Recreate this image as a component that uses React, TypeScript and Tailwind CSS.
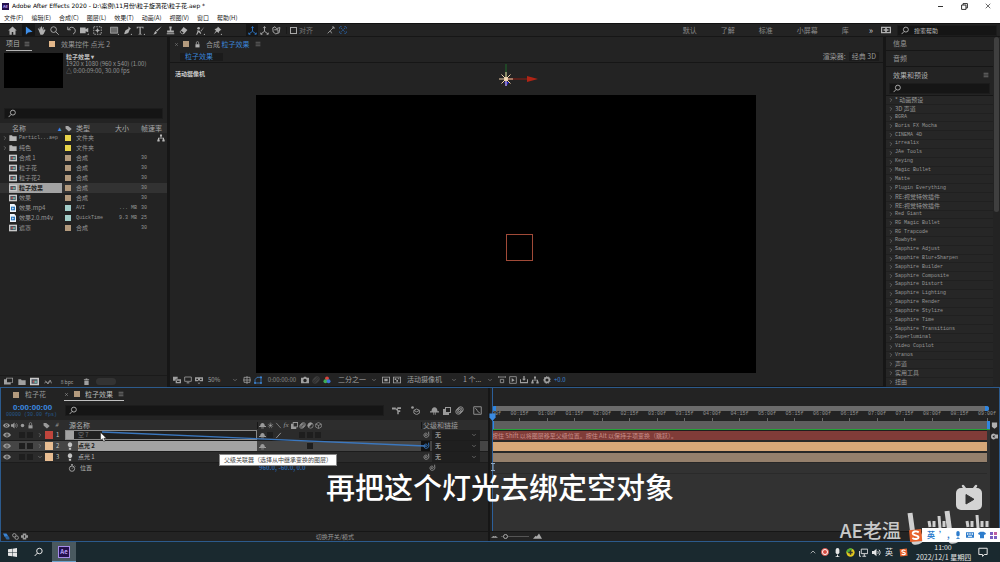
import type { ReactNode } from 'react'
import { ChevronDown, ChevronRight, ChevronUp, Menu, X } from 'lucide-react'
import clsx from 'clsx'

// ─── Icons (12 × 12 grid) ─────────────────────────────────────────────────────

const line = { fill: 'none', stroke: 'currentColor', strokeWidth: 1.2 }

const ICONS = {
  home: <path d="M6 0.5 0.3 6H2v5.5h3V8h2v3.5h3V6h1.7z" />,
  arrow: <path d="M2.5 0.5v11l3-3 6-1z" />,
  hand: <path d="M2 5 1 3.5l1-.6L3.6 5V1.5h1.2V5L5.5.6h1.2V5L8 1.2l1 .3L8.4 6l2-1.6 1 .8-2.6 5.3L7.5 11.5H4.6z" />,
  zoom: <g {...line}><circle cx="4.8" cy="4.8" r="3.8" /><path d="m7.6 7.6 4 4" /></g>,
  rotate: <g {...line}><path d="M2.2 4.2A4.7 4.7 0 1 1 8 10.8" /><path d="M1 1v4h4" /></g>,
  camera: <path d="M0 2h7.5v2.4L11 2.3v6L7.5 7v2.5H0zM9.5 11.8h2.3V9.5z" />,
  panBehind: <g><path {...line} strokeDasharray="2 1.4" d="M1 1h10v10H1z" /><path d="M6 2.8 7.2 5 9.4 6 7.2 7 6 9.2 4.8 7 2.6 6 4.8 5z" /></g>,
  rect: <g><path d="M.6 1.6h9.6v8H.6z" fill="#6b6b6b" stroke="currentColor" /><path d="M10 12h2v-2z" /></g>,
  pen: <path d="m7.4.6 3.2 3.2-1.6 1-2 4.4-4.6 1.8L1.6 10l1.8-4.4 3.8-2zM10 12h2v-2z" />,
  type: <path d="M1 1h9v2.4H9L8.4 2H6.3v8.2l1.4.3v.7H3.3v-.7l1.4-.3V2H2.6L2 3.4H1zM10 12h2v-2z" />,
  brush: <path d="m11.6.4-6 7-1.6-1.3zM3.6 6.8l1.7 1.5c-.5 2-2.6 3-5 2.900 1.800-.8 1.500-3.300 3.300-4.400z" />,
  stamp: <path d="M4.400.8h3.200v1.800L7 3.800V6h3.500v2.500h-9V6H5V3.800l-.6-1.200zM1 9.800h10V11H1z" />,
  eraser: <path d="m6.200 1.200 5 4-4.600 5.600-2.400.2L.8 8zM1.800 8l3 2.400L6.200 9 3 6.400z" />,
  roto: <g><circle cx="3.500" cy="3" r="1.800" /><path d="M1 6h3.500L7 9.500 6 10.500 3.500 8 1.500 11.500H.2L2 7z" /><path d="m11.500.5-4.600 6.800L6 6.500z" /><path d="M10 12h2v-2z" /></g>,
  pin: <path d="m6.500.6 4.800 4.600-1.500.3-2 2.200-.2 2-2.400-2.300L1 11l3-4.800-2-2.200 2-.2L6.200 2zM10 12h2v-2z" />,
  axis: <g {...line}><path d="M6 1v6L1.500 10.500M6 7l4.500 3.500" /><path d="M4.500 2.800 6 .8l1.500 2M1 8.800v2.200h2.200M11 8.800v2.200H8.800" /></g>,
  axisView: <g {...line}><path d="M1 2.500 4 1l2 2.500L10.500 2 9.500 9 5 10.500 1.500 8z" /><path d="M3 5h5v4" /></g>,
  snapEdge: <g {...line}><path d="m1 11 4-4 2 4M5 7l5-5M7.500 1.500h3v3" /></g>,
  snapAll: <g {...line}><path d="M1 4V1h3M8 1h3v3M11 8v3H8M4 11H1V8M3 3l6 6M9 3 3 9" strokeDasharray="2.500 1" /></g>,
  book: <path fillRule="evenodd" d="M0 2h12v8H0zM1.500 3.500v5H5V7H3V5h2V3.500zM7 3.500V5h2v2H7v1.500h3.500v-5z" />,
  search: <g {...line}><circle cx="6.500" cy="4.800" r="3.300" /><path d="M4.200 7.200.8 10.800" /></g>,
  lock: <g><path d="M2.500 5.500h7v5.500h-7z" /><path {...line} d="M4 5.500V3a2 2 0 0 1 4 0v2.500" /></g>,
  tag: <path d="M1 1.500h4.500L11.500 7l-4.700 4L1 6z" />,
  folder: <path d="M.5 2h4l1 1.300h6v7.200H.5z" />,
  comp: <g><path d="M0 1h12v10H0z" fill="#c9c9c9" /><path d="M2 3h8v6H2z" fill="#4b5560" /><circle cx="5" cy="6" r="1.500" fill="#b55" /><path d="M6 5h3v3H6z" fill="#6bb0a6" /></g>,
  movie: <g><path d="M1.500 0h6.500l2.500 2.500V12h-9z" fill="#eef4fa" /><path d="M3 4h6v5.500H3z" fill="#2a78c0" /><path d="M5 5.200v3l2.400-1.500z" fill="#fff" /></g>,
  tree: <path d="M4.500.8h3v3h-1v1.700h4v2.700h1v3H8v-3h1V6.800H3v1.400h1v3H.5v-3h1V5.500h4V3.800h-1z" />,
  footage: <path d="M0 3h3V1h9v6.500H9V10H0zM4 2v5h7V2z" fillRule="evenodd" />,
  flow: <g {...line}><path d="M1 8c2-6 4 3 6-2s4 0 4 2M2 4l4 5 4-6" /></g>,
  trash: <path d="M1.500 2h3V.8h3V2h3v1.300h-9zM2.300 4.200h7.400V12H2.300z" fillRule="evenodd" />,
  layers2: <path d="M0 1h7v3H5v3H0zM4 5h8v6H4zM6 7v2h4V7z" fillRule="evenodd" />,
  monitor: <g><path {...line} d="M1 1.500h10v6.500H1z" /><path d="M4 9.500h4V11H4z" /></g>,
  goggles: <path fillRule="evenodd" d="M0 2h12v6H8L6 6.500 4 8H0zM2 4v2h2.500V4zM7.500 4v2H10V4zM4 10h4l-2 2z" />,
  grid: <g {...line}><path d="M1.500 2h9v7.500h-9zM6 0v12M0 6h12" /></g>,
  mask: <g {...line}><path d="M1.500 10.500V5.500L4.500 2h6v8.500z" /><path d="M0 10.500h3M9 2h3M9 10.500h3" strokeWidth="2.400" /></g>,
  snapshot: <path fillRule="evenodd" d="M0 2.500h3.500L4.500 1h3l1 1.500H12V11H0zM6 4a2.600 2.600 0 1 0 0 5.200A2.600 2.600 0 0 0 6 4z" />,
  channels: <g><circle cx="6" cy="3.500" r="2.900" fill="#d9453e" /><circle cx="3.600" cy="7.800" r="2.900" fill="#3fae55" /><circle cx="8.400" cy="7.800" r="2.900" fill="#3d74d8" /></g>,
  roi: <path fillRule="evenodd" d="M0 1h12v10H0zM1.300 2.300v7.400h9.400V2.300zM3.500 4h5v4h-5z" />,
  checker: <path fillRule="evenodd" d="M0 1h12v10H0zM1.300 2.300v7.400h9.400V2.300zM2.500 3.500H5V6H2.500zM7 3.500h2.500V5H7zM5 6h2.500v2.500H5z" />,
  aspect: <g {...line}><path d="M0 1.500h12M0 3v-3M12 3v-3M3.500 5h5v5h-5z" /></g>,
  fast: <g><path {...line} d="M1 1h10v10H1z" /><path d="M4 3v6l4.500-2.500z" /></g>,
  timelineBtn: <path d="M5 0h2v4h2L6 7 3 4h2zM0 5h1.500v4h9V5H12v6H0z" />,
  gear: <g><circle {...line} strokeWidth="2.400" cx="6" cy="6" r="3.500" /><path {...line} strokeDasharray="1.500 2" d="M6 .7a5.300 5.300 0 1 0 .01 0" /></g>,
  eye: <path fillRule="evenodd" d="M0 6c3-5 9-5 12 0-3 5-9 5-12 0zm6-2.300a2.300 2.300 0 1 0 0 4.600 2.300 2.300 0 0 0 0-4.600zM6 5a1 1 0 1 1 0 2 1 1 0 0 1 0-2z" />,
  speaker: <g><path d="M0 4h2.500L6 1v10L2.500 8H0z" /><path {...line} d="M7.500 4c1 1.300 1 2.700 0 4M9.300 2.300c2 2.300 2 5 0 7.400" /></g>,
  dot: <circle cx="6" cy="6" r="3" />,
  shy: <path d="M2 7C2 3 4 1.500 6 1.500S10 3 10 7h2v1.500H7.500v3h-1V8.500h-1v3h-1V8.500H0V7z" />,
  star: <g><circle cx="6" cy="6" r="2.200" /><path {...line} strokeDasharray="1.500 1.700" d="M6 2a4 4 0 1 0 .01 0" /></g>,
  slash: <path {...line} d="m2 1.500 8 9" />,
  slashUp: <path {...line} strokeWidth="1.600" d="m2 10.500 8-9" />,
  frameBlend: <path fillRule="evenodd" d="M3 0h9v9H9v3H0V3h3zM4.500 1.500v6h6v-6z" />,
  blur: <g {...line}><circle cx="4.500" cy="7.500" r="3.500" /><circle cx="6" cy="6" r="3.500" /><circle cx="7.500" cy="4.500" r="3.500" /></g>,
  adjust: <g><circle {...line} cx="6" cy="6" r="4.600" /><path d="M2.700 9.300 9.300 2.700A4.600 4.600 0 0 0 2.700 9.300z" /></g>,
  cube: <g {...line}><path d="m6 .8 4.800 2.700v5.200L6 11.300 1.200 8.700V3.500zM1.200 3.500 6 6l4.800-2.500M6 6v5" /></g>,
  miniFlow: <path d="M0 2h5v1.300h2V1.500h5V4H8v1.500h3V8H9v3H7V6.500L5 4.500H0z" />,
  draft3d: <g><circle cx="2" cy="2" r="1.800" /><path {...line} d="m7.500 4 3.700 1.800v3.700l-3.700 2-3.700-2V5.800zM3.800 5.800l3.700 2 3.700-2" /></g>,
  graph: <g {...line}><path d="M1 1h10v10H1z" /><path d="M3 3c2 0 3 6 6 6" /></g>,
  spiral: <path {...line} d="M6.500 6a.8.8 0 1 0-1 1c2 .5 3-1.500 2-3S3.500 3 3 5.500s1.500 4.500 4 4 4-3 3-6M10 1v3" />,
  bulb: <path d="M6 .5a3.500 3.500 0 0 1 2 6.300V8H4V6.800A3.500 3.500 0 0 1 6 .5zM4.300 9h3.400v2.500H4.300z" />,
  solid: <path d="M0 0h12v12H0z" fill="#a2a2a2" />,
  stopwatch: <g {...line}><circle cx="6" cy="7" r="4" /><path d="M6 7 8 5M4.500 1h3M6 1v2M10 2.500l1 1" /></g>,
  marker: <path d="M1.500 1h9v7L6 11.500 1.500 8z" />,
  compBtn: <path fillRule="evenodd" d="M5 1a5 5 0 1 0 0 10l3-1.500h4v-7H8zM6 3.500v5L2.500 6z" />,
  toggles: <g><path d="M0 1h6l2 3v3H3z" fill="#3b84d4" /><path d="M4 5h5l2 3v3H6L4 8z" fill="#2c64a0" /></g>,
  circles: <g {...line} strokeWidth="1.600"><circle cx="4" cy="4" r="3" /><circle cx="8" cy="8" r="3" /></g>,
  braces: <path d="M3 1h6v3h3v4H9v3H3V8H0V4h3zM5 4v4h2V4z" fillRule="evenodd" />,
  hillSmall: <path d="m0 8 4-3 2 1 2-1 4 3z" />,
  hillBig: <path d="m0 9 3.500-4L5 6l3-4 4 7z" />,
  win: <path d="M0 1.800 5.400 1v4.700H0zM6 .9 12 0v5.700H6zM0 6.300h5.400V11L0 10.200zM6 6.300h6V12l-6-.9z" />,
  network: <g {...line}><path d="M3 1.500h8.500v6H3zM7 8v3M4.500 11h5M.7 4v7h2" /></g>,
  mic: <g><rect x="3.500" y="0" width="5" height="8" rx="2.500" /><path d="M5.300 8.500h1.400v3H5.300zM3.500 11h5v1h-5z" /></g>,
  note: <path {...line} d="M1 1.500h10v7.500H7.500l-2 2.300V9H1z" />,
  keyboard: <path fillRule="evenodd" d="M0 2h12v8H0zM1.500 3.500v2h2v-2zM5 3.500v2h2v-2zM8.500 3.500v2h2v-2zM3 7v1.500h6V7z" />,
  shirt: <path d="M3.500 1h5L12 3.500 10.500 6 9 5.200V11H3V5.200L1.500 6 0 3.500z" />,
} satisfies Record<string, ReactNode>

type IconName = keyof typeof ICONS

function Icon({ name, className }: { name: IconName; className?: string }) {
  return (
    <svg viewBox="0 0 12 12" fill="currentColor" aria-hidden="true" className={clsx('shrink-0', className ?? 'size-2')}>
      {ICONS[name]}
    </svg>
  )
}

function IconButton({ name, label, className, icon }: { name: IconName; label: string; className?: string; icon?: string }) {
  return (
    <button aria-label={label} className={clsx('flex h-full shrink-0 items-center justify-center', className ?? 'w-[11px]')}>
      <Icon name={name} className={icon} />
    </button>
  )
}

function SogouMark({ className }: { className?: string }) {
  return (
    <svg viewBox="0 0 12 12" aria-hidden="true" className={clsx('shrink-0', className)}>
      <path d="M.8 1.800 10.500.8l.9 9.500-9.700.9z" fill="#e8622c" />
      <path d="M8.600 3.500C6.500 2 3.500 2.800 3.800 4.600c.3 1.500 4.500 1 4.600 2.700.1 1.700-3 2-4.900.7" fill="none" stroke="#fff" strokeWidth="1.500" />
    </svg>
  )
}

// ─── Shared controls ──────────────────────────────────────────────────────────

function Dropdown({ label, options, className }: { label: string; options: string[]; className?: string }) {
  return (
    <span className={clsx('relative flex h-full shrink-0 items-center', className)}>
      <select aria-label={label} className="h-full w-full appearance-none bg-transparent pr-2 pl-[3px] leading-none outline-none">
        {options.map((o) => <option key={o}>{o}</option>)}
      </select>
      <ChevronDown className="pointer-events-none absolute right-[3px] size-[6px] text-[#a0a0a0]" />
    </span>
  )
}

function SearchBox({ label, placeholder, className }: { label: string; placeholder?: string; className?: string }) {
  return (
    <label className={clsx('flex items-center gap-1 border border-[#1c1c1c] bg-[#151515] px-[3px] text-[#b5b5b5]', className)}>
      <Icon name="search" className="size-[9px]" />
      <input
        type="text"
        aria-label={label}
        placeholder={placeholder}
        className="w-0 min-w-0 flex-1 bg-transparent text-[6px] leading-none outline-none placeholder:text-[#b5b5b5]"
      />
    </label>
  )
}

const Swatch = ({ className }: { className: string }) => <span className={clsx('size-[6px] shrink-0', className)} />

// ─── Title, menu and tool bars ────────────────────────────────────────────────

const MENUS = ['文件(F)', '编辑(E)', '合成(C)', '图层(L)', '效果(T)', '动画(A)', '视图(V)', '窗口', '帮助(H)']

function TitleBar() {
  return (
    <header className="shrink-0 bg-white text-[#222]">
      <div className="flex h-3 items-center">
        <span className="ml-[2px] flex size-[7px] items-center justify-center bg-[#24104d] text-[4px] leading-none font-bold text-[#b9a0f5]">Ae</span>
        <h1 className="ml-[3px] flex-1 font-['DejaVu_Sans','Noto_Sans_CJK_SC',sans-serif] text-[6px] leading-none text-black">
          Adobe After Effects 2020 - D:\案例\11月份\粒子旋涡花\粒子花.aep *
        </h1>
        <button aria-label="最小化" className="flex w-6 justify-center"><span className="h-px w-[5px] bg-[#333]" /></button>
        <button aria-label="还原" className="flex w-6 justify-center">
          <svg viewBox="0 0 12 12" className="size-[7px]" fill="none" stroke="#222" strokeWidth="1.600"><path d="M1 3.500h7.500V11H1zM3.500 3.500V1H11v7.500H8.500" /></svg>
        </button>
        <button aria-label="关闭" className="flex w-6 justify-center"><X className="size-2" /></button>
      </div>
      <nav className="flex h-[11px] items-center gap-2 pl-1 text-[6px] leading-none">
        {MENUS.map((m) => <button key={m}>{m}</button>)}
      </nav>
    </header>
  )
}

const TOOLS: { name: IconName; label: string; gap?: boolean }[] = [
  { name: 'hand', label: '手形' },
  { name: 'zoom', label: '缩放', gap: true },
  { name: 'rotate', label: '旋转' },
  { name: 'camera', label: '摄像机' },
  { name: 'panBehind', label: '锚点', gap: true },
  { name: 'rect', label: '矩形' },
  { name: 'pen', label: '钢笔' },
  { name: 'type', label: '文字', gap: true },
  { name: 'brush', label: '画笔' },
  { name: 'stamp', label: '仿制图章' },
  { name: 'eraser', label: '橡皮擦', gap: true },
  { name: 'roto', label: 'Roto 笔刷', gap: true },
  { name: 'pin', label: '操控点' },
]

function ToolBar() {
  return (
    <div className="flex h-[14px] shrink-0 items-center border-t border-b border-t-[#111] border-b-[#161616] bg-[#232323] text-[#b0b0b0]">
      <IconButton name="home" label="主页" icon="size-[9px]" className="mr-[3px] ml-[5px] w-[14px]" />
      <IconButton name="arrow" label="选取" icon="size-[9px]" className="w-[13px] bg-[#161616] text-[#3f8fe8]" />
      {TOOLS.map((t) => (
        <IconButton key={t.name} name={t.name} label={t.label} icon="size-[9px]" className={t.gap ? 'mr-1 w-[13px]' : 'w-[13px]'} />
      ))}
      <IconButton name="axis" label="本地轴" icon="size-[9px]" className="ml-[22px] w-3 bg-[#161616] text-[#2f78c8]" />
      <IconButton name="axis" label="世界轴" icon="size-[9px]" className="w-3" />
      <IconButton name="axisView" label="视图轴" icon="size-[9px]" className="w-3" />
      <label className="ml-1 flex items-center gap-[2px] border-l border-[#1a1a1a] pl-[3px] text-[7px] leading-none text-[#777]">
        <input type="checkbox" className="size-[7px] appearance-none border border-[#a8a8a8]" />
        对齐
      </label>
      <IconButton name="snapEdge" label="对齐边缘" className="ml-3 w-3" />
      <IconButton name="snapAll" label="对齐折叠" className="w-3 text-[#2a62a4]" />
      <nav className="ml-auto flex items-center gap-6 pr-6 text-[7px] leading-none text-[#8a8a8a]">
        {['默认', '了解', '标准', '小屏幕', '库'].map((w) => <button key={w}>{w}</button>)}
        <button aria-label="更多" className="-ml-1 text-[9px] leading-none text-[#c0c0c0]">»</button>
      </nav>
      <IconButton name="book" label="学习" icon="size-[10px]" className="-ml-4 w-[10px]" />
      <SearchBox label="搜索帮助" placeholder="搜索帮助" className="mr-[3px] ml-[6px] h-[11px] w-[100px]" />
    </div>
  )
}

// ─── Project panel ────────────────────────────────────────────────────────────

interface Item {
  name: string
  icon: IconName
  swatch: string
  type: string
  size?: string
  rate?: string
  latin?: boolean
  selected?: boolean
}

const ITEMS: Item[] = [
  { name: 'Particl...aep', icon: 'folder', swatch: 'bg-[#e8d44a]', type: '文件夹', latin: true },
  { name: '纯色', icon: 'folder', swatch: 'bg-[#e8d44a]', type: '文件夹' },
  { name: '合成 1', icon: 'comp', swatch: 'bg-[#b39a7d]', type: '合成', rate: '30' },
  { name: '粒子花', icon: 'comp', swatch: 'bg-[#b39a7d]', type: '合成', rate: '30' },
  { name: '粒子花2', icon: 'comp', swatch: 'bg-[#b39a7d]', type: '合成', rate: '30' },
  { name: '粒子效果', icon: 'comp', swatch: 'bg-[#b39a7d]', type: '合成', rate: '30', selected: true },
  { name: '效果', icon: 'comp', swatch: 'bg-[#b39a7d]', type: '合成', rate: '30' },
  { name: '效果.mp4', icon: 'movie', swatch: 'bg-[#a3cdc8]', type: 'AVI', size: '... MB', rate: '30' },
  { name: '效果2.0.m4v', icon: 'movie', swatch: 'bg-[#a3cdc8]', type: 'QuickTime', size: '9.3 MB', rate: '25' },
  { name: '遮罩', icon: 'comp', swatch: 'bg-[#b39a7d]', type: '合成', rate: '30' },
]

function ProjectPanel() {
  return (
    <section aria-label="项目" className="flex w-[167px] shrink-0 flex-col bg-[#232323] text-[#969696]">
      <div className="flex h-[14px] items-stretch pl-[6px] text-[7px] leading-none">
        <button className="flex items-center gap-1 border-b border-[#b5b5b5] pr-[2px] text-[#b0b0b0]">项目 <Menu className="size-[6px]" /></button>
        <button className="ml-[17px] flex items-center gap-[6px]"><Swatch className="bg-[#e3b78a]" />效果控件 点光 2</button>
      </div>
      <div className="mt-[2px] flex gap-[3px] pl-1 text-[6px] leading-[7px]">
        <div className="h-[35px] w-[59px] bg-black" />
        <div>
          <p className="font-bold text-[#c0c0c0]">粒子效果 ▾</p>
          <p>1920 x 1080 (960 x 540) (1.00)</p>
          <p>△ 0:00:09:00, 30.00 fps</p>
        </div>
      </div>
      <SearchBox label="搜索项目" className="mx-1 mt-5 h-[11px]" />
      <table className="mt-1 w-full table-fixed border-collapse text-[6px] leading-[10px] whitespace-nowrap">
        <colgroup>
          <col className="w-[62px]" /><col className="w-[14px]" /><col className="w-[39px]" /><col className="w-[22px]" /><col />
        </colgroup>
        <thead>
          <tr className="h-[10px] bg-[#2d2d2d] text-left text-[7px] text-[#a8a8a8]">
            <th className="p-0 pl-3 font-normal"><span className="flex justify-between">名称 <span className="text-[#3f8fe8]">▴</span></span></th>
            <th className="p-0 pl-[3px]"><Icon name="tag" className="size-[7px]" /></th>
            <th className="p-0 font-normal">类型</th>
            <th className="p-0 font-normal">大小</th>
            <th className="p-0 pl-1 font-normal">帧速率</th>
          </tr>
        </thead>
        <tbody>
          {ITEMS.map((item) => (
            <tr key={item.name} className={clsx('h-[10px]', item.selected && 'bg-[#323232]')}>
              <td className="p-0">
                <span className="flex h-[10px] items-center">
                  <span className="flex w-[9px] justify-center">
                    {item.icon === 'folder' && <ChevronRight className="size-[6px]" />}
                  </span>
                  <span className={clsx('flex flex-1 items-center gap-[2px]', item.selected && 'bg-[#a3a3a3] font-bold text-[#1c1c1c]')}>
                    <Icon name={item.icon} className={item.icon === 'folder' ? 'size-2 text-[#b8b8b8]' : 'size-2'} />
                    <span className={clsx(item.latin && "font-['Liberation_Mono',monospace] text-[5px]")}>{item.name}</span>
                  </span>
                </span>
              </td>
              <td className="p-0 pl-[3px]"><Swatch className={clsx('block size-[5px]', item.swatch)} /></td>
              <td className={clsx('p-0', item.size && "font-['Liberation_Mono',monospace] text-[5px]")}>{item.type}</td>
              <td className="p-0 text-right font-['Liberation_Mono',monospace] text-[5px]">{item.size}</td>
              <td className="p-0 pl-1 font-['Liberation_Mono',monospace] text-[5px]">
                <span className="flex items-center justify-between pr-[2px]">
                  {item.rate}
                  {item.latin && <Icon name="tree" className="ml-auto size-2 text-[#b8b8b8]" />}
                </span>
              </td>
            </tr>
          ))}
        </tbody>
      </table>
      <div className="mt-auto flex h-3 items-center border-t border-[#1a1a1a] pl-[2px] text-[#a0a0a0]">
        <IconButton name="footage" label="解释素材" className="w-[13px]" icon="size-[9px]" />
        <IconButton name="folder" label="新建文件夹" className="w-[13px]" />
        <IconButton name="comp" label="新建合成" className="w-[13px]" icon="size-[9px]" />
        <IconButton name="flow" label="代理" className="w-[13px]" />
        <button className="mx-[3px] w-[20px] text-[5px] leading-none">8 bpc</button>
        <IconButton name="trash" label="删除" className="w-[13px]" icon="size-[7px]" />
        <span className="ml-[3px] h-[7px] w-5 rounded-full bg-[#333]" />
      </div>
    </section>
  )
}

// ─── Composition viewer ───────────────────────────────────────────────────────

function Gizmo() {
  return (
    <svg viewBox="0 0 48 28" aria-hidden="true" className="absolute -top-[31px] left-1/2 -ml-2 h-7 w-12">
      <path d="M8 0v14" stroke="#1f6b2a" />
      <path d="M8 15v7" stroke="#2222d8" strokeWidth="2" />
      <path d="M6 18h5l-2.500 4z" fill="#2222d8" />
      <path d="M9 15h20" stroke="#8f1f14" />
      <path d="M29 12l11 3-11 3z" fill="#b02415" />
      <path d="M1 15h14M8 8v14M3.500 10.500l9 9M12.500 10.500l-9 9" stroke="#f0cfa8" strokeWidth="1" />
      <circle cx="8" cy="15" r="2" fill="#f7dcb8" />
    </svg>
  )
}

function Composition() {
  return (
    <section aria-label="合成" className="flex min-w-0 flex-1 flex-col bg-[#232323] text-[7px] leading-none text-[#9a9a9a]">
      <div className="flex h-[14px] items-center gap-[5px] pl-1">
        <button aria-label="关闭"><X className="size-[5px]" /></button>
        <Swatch className="-ml-px bg-[#b39a7d]" />
        <Icon name="lock" className="size-[7px] text-[#b0b0b0]" />
        <span className="whitespace-nowrap">合成 <span className="text-[#3b84d4]">粒子效果</span></span>
        <Menu className="size-[6px]" />
      </div>
      <div className="flex h-3 items-center border-b border-[#161616] pr-1 pl-[10px]">
        <button className="h-2 w-[43px] bg-[#1b1b1b] pl-[5px] text-left leading-none text-[#3b84d4]">粒子效果</button>
        <span className="mr-[3px] ml-auto">渲染器:</span>
        <button className="h-[9px] bg-[#1b1b1b] px-[3px] leading-none">经典 3D</button>
      </div>
      <div className="relative flex min-h-0 flex-1 pt-8 pr-[127px] pl-[86px]">
        <span className="absolute top-2 left-[5px] text-[6px] font-bold text-[#cfcfcf]">活动摄像机</span>
        <div className="relative flex-1 bg-black">
          <Gizmo />
          <div className="absolute top-1/2 left-1/2 size-[27px] border border-[#a04a38]" />
        </div>
      </div>
      <div className="flex h-[14px] items-center border-b border-[#161616] pl-px text-[#a0a0a0]">
        <IconButton name="layers2" label="始终预览" />
        <IconButton name="monitor" label="主查看器" />
        <IconButton name="goggles" label="3D 眼镜" />
        <Dropdown label="放大率" options={['50%']} className="ml-px w-9 text-[6px]" />
        <IconButton name="grid" label="网格" />
        <IconButton name="mask" label="蒙版可见性" className="mr-[2px] w-[11px] text-[#3b84d4]" />
        <button className="w-[34px] text-[6px] leading-none text-[#8a8a8a]">0:00:00:00</button>
        <IconButton name="snapshot" label="快照" />
        <IconButton name="blur" label="显示快照" className="w-[11px] text-[#444]" />
        <IconButton name="channels" label="通道" />
        <Dropdown label="分辨率" options={['二分之一']} className="ml-[3px] w-[45px]" />
        <IconButton name="roi" label="目标区域" />
        <IconButton name="checker" label="透明网格" />
        <Dropdown label="3D 视图" options={['活动摄像机']} className="ml-[2px] w-14" />
        <Dropdown label="视图布局" options={['1 个...']} className="w-9" />
        <IconButton name="aspect" label="像素长宽比" />
        <IconButton name="fast" label="快速预览" />
        <IconButton name="timelineBtn" label="时间轴" />
        <IconButton name="tree" label="流程图" />
        <IconButton name="gear" label="重置曝光度" className="w-[13px]" />
        <button className="ml-px text-[6px] leading-none text-[#3b84d4]">+0.0</button>
      </div>
    </section>
  )
}

// ─── Effects & presets ────────────────────────────────────────────────────────

const EFFECTS = [
  '* 动画预设', '3D 声道', 'BGRA', 'Boris FX Mocha', 'CINEMA 4D', 'irrealix', 'JAe Tools', 'Keying',
  'Magic Bullet', 'Matte', 'Plugin Everything', 'RE:视觉特效插件', 'RE:视觉特效插件', 'Red Giant',
  'RG Magic Bullet', 'RG Trapcode', 'Rowbyte', 'Sapphire Adjust', 'Sapphire Blur+Sharpen',
  'Sapphire Builder', 'Sapphire Composite', 'Sapphire Distort', 'Sapphire Lighting', 'Sapphire Render',
  'Sapphire Stylize', 'Sapphire Time', 'Sapphire Transitions', 'Superluminal', 'Video Copilot',
  'Vranos', '声道', '实用工具', '扭曲',
]

function EffectsPanel() {
  return (
    <aside className="flex w-[114px] shrink-0 bg-[#232323] text-[7px] leading-none text-[#969696]">
      <div className="flex min-w-0 flex-1 flex-col">
        <h2 className="flex h-[14px] items-center border-b border-[#161616] pl-[7px]">信息</h2>
        <h2 className="flex h-4 items-center border-b border-[#161616] pl-[7px]">音频</h2>
        <h2 className="flex h-4 items-center justify-between pr-1 pl-[7px] text-[#b0b0b0]">效果和预设 <Menu className="size-[6px]" /></h2>
        <SearchBox label="搜索效果" className="mx-[3px] h-[11px]" />
        <ul className="mt-px flex min-h-0 flex-1 flex-col border-t border-[#161616]">
          {EFFECTS.map((name, i) => (
            <li key={i} className="flex min-h-0 flex-1 items-center gap-px border-b border-[#202020] bg-[#262626] pl-[2px] leading-none whitespace-nowrap">
              <ChevronRight className="size-[6px] shrink-0" />
              <span className={/^[\x20-\x7e]+$/.test(name) ? "font-['Liberation_Mono',monospace] text-[5px]" : 'text-[6px]'}>{name}</span>
            </li>
          ))}
        </ul>
      </div>
      <div className="w-[7px] shrink-0 px-px">
        <div className="h-1/2 rounded-full bg-[#3f3f3f]" />
      </div>
    </aside>
  )
}

// ─── Timeline ─────────────────────────────────────────────────────────────────

const LAYERS = [
  { no: 1, name: '空 7', icon: 'solid', swatch: 'bg-[#c0453c]', linked: false },
  { no: 2, name: '点光 2', icon: 'bulb', swatch: 'bg-[#e8bd92]', linked: true },
  { no: 3, name: '点光 1', icon: 'bulb', swatch: 'bg-[#e8bd92]', linked: false },
] as const

const SWITCHES: IconName[] = ['shy', 'star', 'slash', 'type', 'frameBlend', 'blur', 'adjust', 'cube']
const ROW = 'grid grid-cols-[64px_1fr_164px_67px] items-center'

function LayerRow({ layer }: { layer: (typeof LAYERS)[number] }) {
  const selected = layer.no === 2
  const isNull = layer.no === 1
  return (
    <div className={clsx(ROW, 'h-[11px] border-b border-[#1c1c1c] text-[6px] leading-none', selected ? 'bg-[#454545]' : 'bg-[#2b2b2b]')}>
      <div className="flex items-center">
        <IconButton name="eye" label="可视" className="mr-[7px] w-[11px]" />
        <span className="size-[6px] bg-[#1e1e1e]" />
        <span className="ml-[2px] size-[6px] bg-[#1e1e1e]" />
        <button aria-label="展开" className="ml-1 w-[7px]">
          {layer.no === 3 ? <ChevronDown className="size-[6px]" /> : <ChevronRight className="size-[6px]" />}
        </button>
        <span className={clsx('ml-px size-2', layer.swatch)} />
        <span className="ml-[3px] text-[#c0c0c0]">{layer.no}</span>
      </div>
      <div className={clsx('flex h-[10px] items-center gap-1', isNull && 'border border-[#8a8a8a] bg-[#202020] text-[#777]', !isNull && 'pl-px')}>
        <Icon name={layer.icon} className={clsx('size-[8px]', !isNull && 'text-[#c4c4c4]')} />
        <span className={clsx('flex h-full flex-1 items-center', selected ? 'bg-[#a3a3a3] font-bold text-[#222]' : !isNull && 'text-[#b5b5b5]')}>{layer.name}</span>
      </div>
      <div className="flex items-center pl-px">
        {SWITCHES.map((s, i) => (
          <span key={s} className="flex w-2 justify-center">
            {i === 0 && <Icon name="shy" className="size-[7px]" />}
            {isNull && i === 2 && <Icon name="slashUp" className="size-[7px]" />}
            {((isNull && (i === 1 || i > 4)) || (selected && i === 6)) && <span className="size-[6px] bg-[#1e1e1e]" />}
          </span>
        ))}
      </div>
      <div className="flex h-[10px] items-center">
        <IconButton name="spiral" label="父级关联器" className={layer.linked ? 'w-[9px] bg-[#111] text-[#3b84d4]' : 'w-[9px]'} />
        <Dropdown label="父级" options={['无']} className="ml-[2px] w-12 bg-[#1f1f1f] text-[#c0c0c0]" />
      </div>
    </div>
  )
}

function LayerList() {
  return (
    <div className="flex min-w-0 flex-col border-r-2 border-[#161616] text-[#9a9a9a]">
      <div className="flex h-[13px] items-stretch pl-3 text-[7px] leading-none">
        <button className="flex items-center gap-[6px]"><Swatch className="bg-[#b39a7d]" />粒子花</button>
        <button className="ml-[18px] flex items-center gap-[5px] border-b border-[#c0c0c0] text-[#b8b8b8]">
          <X className="size-[5px]" /><Swatch className="bg-[#b39a7d]" />粒子效果 <Menu className="size-[6px]" />
        </button>
      </div>
      <div className="flex h-[19px] items-center">
        <div className="w-[64px] shrink-0 pl-[5px] font-['Liberation_Mono',monospace] leading-none">
          <p className="pl-[7px] font-['Liberation_Sans',sans-serif] text-[8px] leading-none font-bold text-[#3b8ae0]">0:00:00:00</p>
          <p className="text-[5px] leading-[6px] whitespace-nowrap text-[#24598f]">00000 (30.00 fps)</p>
        </div>
        <SearchBox label="搜索图层" className="h-[11px] min-w-0 flex-1" />
        <div className="flex w-[104px] shrink-0 items-center justify-between pr-[6px] pl-2">
          <Icon name="miniFlow" className="mr-[6px] size-[9px]" />
          <Icon name="draft3d" className="mr-[6px] size-[9px]" />
          <Icon name="shy" className="size-[9px]" />
          <Icon name="frameBlend" className="size-2" />
          <Icon name="blur" className="mr-[5px] size-[9px]" />
          <Icon name="graph" className="size-[9px]" />
        </div>
      </div>
      <div className={clsx(ROW, 'h-[10px] bg-[#2d2d2d] text-[7px] leading-none')}>
        <div className="flex items-center gap-px pl-[2px]">
          <Icon name="eye" className="size-[7px]" />
          <Icon name="speaker" className="size-[7px]" />
          <Icon name="dot" className="size-[7px]" />
          <Icon name="lock" className="size-[7px]" />
          <Icon name="tag" className="ml-2 size-[7px]" />
          <span className="ml-1 text-[6px] italic">#</span>
        </div>
        <span className="pl-1 text-[#b0b0b0]">源名称</span>
        <div className="flex items-center border-l border-[#161616]">
          {SWITCHES.map((s) => (
            <span key={s} className="flex w-2 justify-center">
              {s === 'type' ? <span className="font-['Liberation_Serif',serif] text-[7px] leading-none italic">fx</span> : <Icon name={s} className="size-[7px]" />}
            </span>
          ))}
        </div>
        <span className="border-l border-[#161616] pl-px">父级和链接</span>
      </div>
      <div className="relative">
        {LAYERS.map((l) => <LayerRow key={l.no} layer={l} />)}
        <div className={clsx(ROW, 'h-[10px] text-[6px] leading-none')}>
          <span />
          <span className="flex items-center gap-1 pl-[3px] text-[#b5b5b5]"><Icon name="stopwatch" />位置</span>
          <span className="pl-[2px] font-bold text-[#2a62a4]">960.0, -60.0, 0.0</span>
          <Icon name="spiral" className="ml-[7px] size-2" />
        </div>
        {/* pick whip being dragged from layer 2 to layer 1 */}
        <svg viewBox="0 0 330 24" preserveAspectRatio="none" aria-hidden="true" className="absolute top-0 right-[58px] left-[99px] h-6 w-[calc(100%-160px)]">
          <path d="M2 2 328 16" stroke="#3b78c0" strokeWidth="1.300" fill="none" />
        </svg>
        <svg viewBox="0 0 8 12" aria-hidden="true" className="absolute top-[2px] left-[99px] h-[10px] w-[7px]">
          <path d="M.5.5v9.500l2.200-2 1.500 3.600 1.700-.7-1.500-3.500h3z" fill="#fff" stroke="#222" strokeWidth=".6" />
        </svg>
        <div role="tooltip" className="absolute top-6 left-[218px] h-3 border border-[#888] bg-white px-1 text-[6px] leading-[10px] whitespace-nowrap text-[#444]">
          父级关联器（选择从中继承变换的图层）
        </div>
      </div>
      <div className="mt-auto flex h-[10px] items-center border-t border-[#161616] pl-px text-[#9a9a9a]">
        <IconButton name="toggles" label="图层开关" className="w-[9px]" icon="size-[7px]" />
        <IconButton name="circles" label="转换控制" className="w-[9px]" icon="size-[7px]" />
        <IconButton name="braces" label="入点出点" className="w-[9px]" icon="size-[7px]" />
        <button className="ml-[59%] text-[6px] leading-none">切换开关/模式</button>
      </div>
    </div>
  )
}

const TICKS = Array.from({ length: 18 }, (_, i) => {
  const half = i + 1
  return `0${Math.floor(half / 2)}:${half % 2 ? '15' : '00'}f`
})

function Tracks() {
  return (
    <div className="flex min-w-0 flex-col">
      <div className="flex min-h-0 flex-1">
        <div className="relative flex min-w-0 flex-1 flex-col bg-[#232323] pt-[18px] pl-[2px]">
          <div className="mr-px flex h-[5px] justify-between rounded-full bg-[#6b6b6b]">
            <span className="w-1 rounded-l-full bg-[#2f86e0]" />
            <span className="w-1 rounded-r-full bg-[#2f86e0]" />
          </div>
          <div className="mr-[3px] flex h-[10px] justify-between font-['Liberation_Mono',monospace] text-[5px] leading-[6px] text-[#969696]">
            <span className="w-0 whitespace-nowrap">00f</span>
            {TICKS.map((t) => (
              <span key={t} className="flex w-0 flex-col items-center">
                {t}
                <span className="mt-px h-[3px] w-px shrink-0 bg-[#6b6b6b]" />
              </span>
            ))}
          </div>
          <div className="flex h-2 justify-between bg-[#5e5e5e]">
            <span className="w-[2px] bg-[#2f86e0]" />
            <span className="w-[3px] bg-[#2f86e0]" />
          </div>
          <div className="h-px bg-[#25a238]" />
          <div className="flex flex-1 flex-col bg-[#323232] pr-[3px]">
            <div className="h-[11px] border-t border-b border-t-[#1e1e1e] border-b-[#282828] bg-[#803c38] text-[6px] leading-[9px] whitespace-nowrap text-[#c98f8a]">
              按住 Shift 以将图层移至父级位置。按住 Alt 以保持子项变换（跳跃）。
            </div>
            <div className="h-[11px] border-t border-b border-[#282828] bg-[#d8a878]" />
            <div className="h-[11px] border-t border-b border-[#282828] bg-[#95806c]" />
            <div className="h-[11px] border-b border-[#2a2a2a]" />
          </div>
          {/* current time indicator */}
          <div className="absolute inset-y-0 left-[2px] w-px bg-[#2c5f9a]" />
          <svg viewBox="0 0 8 10" aria-hidden="true" className="absolute top-6 -left-px h-[10px] w-[7px]">
            <path d="M.5 1h7v4.500L4 9.500.5 5.500z" fill="#3b8ae0" />
          </svg>
          <svg viewBox="0 0 6 8" aria-hidden="true" className="absolute top-[75px] left-0 h-2 w-[6px]">
            <path d="M1 .5h4M3 .5v7M1 7.500h4" fill="none" stroke="#8fa7c0" />
          </svg>
        </div>
        <div className="flex w-[9px] shrink-0 flex-col items-center gap-1 pt-[34px] text-[#b0b0b0]">
          <Icon name="marker" className="size-[7px]" />
          <Icon name="compBtn" className="size-[7px]" />
        </div>
      </div>
      <div className="flex h-[10px] items-center gap-[3px] border-t border-[#161616] pl-px text-[#a8a8a8]">
        <Icon name="hillSmall" className="size-[7px]" />
        <input
          type="range"
          aria-label="时间轴缩放"
          defaultValue={10}
          className="h-px w-7 appearance-none bg-[#555] [&::-webkit-slider-thumb]:size-[5px] [&::-webkit-slider-thumb]:appearance-none [&::-webkit-slider-thumb]:rounded-full [&::-webkit-slider-thumb]:border [&::-webkit-slider-thumb]:border-[#a8a8a8] [&::-webkit-slider-thumb]:bg-[#232323]"
        />
        <Icon name="hillBig" className="ml-px size-[9px]" />
      </div>
    </div>
  )
}

function Timeline() {
  return (
    <section aria-label="时间轴" className="grid h-[155px] shrink-0 grid-cols-[489fr_509fr] border border-[#2c5a8c] bg-[#232323]">
      <LayerList />
      <Tracks />
    </section>
  )
}

// ─── Task bar ─────────────────────────────────────────────────────────────────

function TaskBar() {
  return (
    <footer className="flex h-5 shrink-0 items-center bg-[#1a292f] text-[#e6e6e6]">
      <IconButton name="win" label="开始" className="w-[25px]" icon="size-[9px]" />
      <IconButton name="search" label="搜索" className="w-[27px]" icon="size-[10px]" />
      <button className="flex h-full w-6 items-center justify-center border-b border-[#6da3cc] bg-[#4a595f]">
        <span className="flex size-3 items-center justify-center border border-[#a68be8] bg-[#24104d] text-[6px] leading-none font-bold text-[#b9a0f5]">Ae</span>
      </button>
      <div className="ml-auto flex items-center gap-1">
        <ChevronUp className="size-2" />
        <span className="flex size-2 items-center justify-center rounded-full border border-[#d84a40] bg-white"><span className="size-1 rounded-full bg-[#d84a40]" /></span>
        <Icon name="mic" className="size-[9px]" />
        <svg viewBox="0 0 12 12" className="size-[9px]" aria-hidden="true">
          <circle cx="6" cy="6" r="5.500" fill="#e2c81e" /><path d="M.5 6a5.500 5.500 0 0 1 8-5L6 6z" fill="#4caf3a" /><path d="M5 3h2v2h2v2H7v2H5V7H3V5h2z" fill="#333" />
        </svg>
        <Icon name="network" className="size-[9px]" />
        <Icon name="speaker" className="size-[9px]" />
        <span className="text-[8px] leading-none">英</span>
        <SogouMark className="ml-[2px] size-[9px]" />
      </div>
      <div className="ml-2 w-[54px] text-center text-[7px] leading-[10px] whitespace-nowrap">
        <p>11:00</p>
        <p>2022/12/1 星期四</p>
      </div>
      <IconButton name="note" label="通知" className="mr-3 ml-2 w-[10px]" icon="size-[10px]" />
    </footer>
  )
}

// ─── Overlays ─────────────────────────────────────────────────────────────────

function Overlays() {
  return (
    <div className="pointer-events-none">
      <p className="absolute inset-x-0 bottom-[61px] text-center text-[29px] leading-[30px] font-medium text-white">再把这个灯光去绑定空对象</p>
      <p className="absolute right-[99px] bottom-[22px] text-[19px] leading-5 font-medium text-[#c9c9c9]">AE老温</p>
      <svg viewBox="0 0 95 66" aria-hidden="true" className="absolute right-0 bottom-4 h-[66px] w-[95px]">
        <g fill="none" stroke="#cfcfcf" strokeLinecap="round" strokeLinejoin="round">
          <path d="M58 6l3 4M71 6l-3 4" strokeWidth="2.500" />
          <path d="M5 33l4 29c4 1 9-2 10-8" strokeWidth="5" strokeLinecap="butt" />
          <path d="M24 41l1 6M29 41v6M28 52v9M34 36l2 25M44 41v6M39 41v6" strokeWidth="3" strokeLinecap="butt" />
          <path d="M42 31l4 30c4 1 9-2 10-8" strokeWidth="5" strokeLinecap="butt" />
          <path d="M62 41l1 6M67 41v6M72 35l2 25M77 41v6M82 41v6" strokeWidth="3" strokeLinecap="butt" />
        </g>
        <rect x="51" y="8" width="26" height="22" rx="5" fill="#d4d4d4" />
        <path d="M61 14.500v9.500l8-4.700z" fill="#333" stroke="#333" strokeLinejoin="round" />
      </svg>
      <div className="absolute right-0 bottom-5 flex h-[14px] w-[78px] items-center justify-between bg-white pr-[3px] pl-[5px] text-[#2d7ccc]">
        <SogouMark className="absolute -left-[14px] size-[15px]" />
        <span className="text-[8px] leading-none font-bold">英</span>
        <span className="text-[8px] leading-none font-bold">’,</span>
        <Icon name="mic" />
        <Icon name="keyboard" />
        <Icon name="shirt" />
        <span className="grid grid-cols-2 gap-px">
          <span className="size-[3px] bg-[#7b5fc0]" /><span className="size-[3px] bg-[#c05fa0]" />
          <span className="size-[3px] bg-[#7b5fc0]" /><span className="size-[3px] bg-[#7b5fc0]" />
        </span>
      </div>
    </div>
  )
}

export default function App() {
  return (
    <div className="relative flex h-screen flex-col overflow-hidden bg-[#161616] font-['Noto_Sans_CJK_SC',sans-serif]">
      <TitleBar />
      <ToolBar />
      <main className="flex min-h-0 flex-1 gap-[3px]">
        <ProjectPanel />
        <Composition />
        <EffectsPanel />
      </main>
      <Timeline />
      <TaskBar />
      <Overlays />
    </div>
  )
}
